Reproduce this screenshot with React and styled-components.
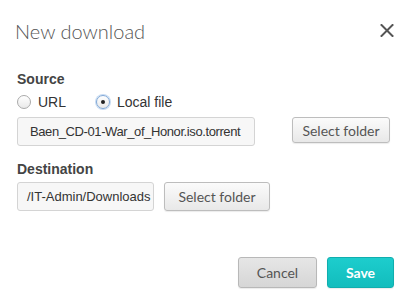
import React from "react";
import styled, { createGlobalStyle } from "styled-components";

const Global = createGlobalStyle`
  html, body { margin: 0; padding: 0; background: #fff; }
  * { box-sizing: border-box; }
`;

const Dialog = styled.div`
  width: 408px;
  height: 305px;
  background: #fff;
  display: flex;
  flex-direction: column;
`;

const Header = styled.div`
  display: flex;
  justify-content: space-between;
  align-items: center;
  padding: 17px 14px 0 15px;
  height: 44px;
`;

const Title = styled.h1`
  margin: 0;
  font-family: Lato, sans-serif;
  font-weight: 300;
  font-size: 20px;
  line-height: 24px;
  color: #555;
`;

const Close = styled.button`
  border: 0;
  background: none;
  padding: 0;
  width: 14px;
  height: 14px;
  display: flex;
  cursor: pointer;
`;

const Body = styled.div`
  padding: 27px 18px 0 17px;
  display: flex;
  flex-direction: column;
`;

const Label = styled.div`
  font-family: "Liberation Sans", Arial, sans-serif;
  font-weight: 700;
  font-size: 14px;
  line-height: 16px;
  color: #444;
  margin-top: ${(p) => p.$top || 0}px;
`;

const RadioRow = styled.div`
  display: flex;
  gap: 30px;
  height: 30px;
  align-items: center;
`;

const RadioLabel = styled.label`
  display: flex;
  align-items: center;
  gap: 7px;
  font-family: "Liberation Sans", Arial, sans-serif;
  font-size: 14px;
  color: #333;
`;

const Dot = styled.span`
  width: 14px;
  height: 14px;
  border-radius: 50%;
  border: 1px solid ${(p) => (p.$on ? "#7fa7d6" : "#aaa")};
  background: linear-gradient(#fff, #e9e9e9);
  box-shadow: ${(p) => (p.$on ? "0 0 0 1px #c7dbf2" : "none")};
  display: flex;
  align-items: center;
  justify-content: center;
  &::after {
    content: "";
    width: 4px;
    height: 4px;
    border-radius: 50%;
    background: ${(p) => (p.$on ? "#222" : "transparent")};
  }
`;

const FieldRow = styled.div`
  display: flex;
  align-items: flex-start;
  justify-content: ${(p) => (p.$spread ? "space-between" : "flex-start")};
  gap: 10px;
  margin-top: ${(p) => p.$top || 0}px;
`;

const Field = styled.div`
  width: ${(p) => p.$w}px;
  height: 29px;
  border: 1px solid #d4d4d4;
  border-radius: 3px;
  background: #f7f7f7;
  font-family: "Liberation Sans", Arial, sans-serif;
  font-size: 13px;
  letter-spacing: ${(p) => p.$track || 0}px;
  color: #333;
  display: flex;
  align-items: center;
  padding-left: ${(p) => p.$pad}px;
  white-space: nowrap;
  overflow: hidden;
`;

const Button = styled.button`
  width: ${(p) => p.$w}px;
  height: ${(p) => p.$h}px;
  border: 1px solid #bdbdbd;
  border-radius: 3px;
  background: linear-gradient(#fbfbfb, #e8e8e8);
  box-shadow: 0 1px 1px rgba(0, 0, 0, 0.08);
  font-family: Lato, sans-serif;
  font-size: 14px;
  color: #555;
  padding: 0;
  cursor: pointer;
`;

const Footer = styled.div`
  margin-top: auto;
  display: flex;
  justify-content: flex-end;
  gap: 10px;
  padding: 0 14px 17px 0;
`;

const Cancel = styled(Button)`
  background: linear-gradient(#e6e6e6, #d6d6d6);
  border-color: #b8b8b8;
`;

const Save = styled(Button)`
  background: linear-gradient(#1dcdcd, #12bdbd);
  border-color: #10aeae;
  color: #fff;
  font-weight: 700;
`;

export default function App() {
  return (
    <Dialog>
      <Global />
      <Header>
        <Title>New download</Title>
        <Close aria-label="Close">
          <svg width="14" height="13" viewBox="0 0 14 13">
            <path d="M1.5 1 L12.5 12 M12.5 1 L1.5 12" stroke="#555" strokeWidth="2" strokeLinecap="square" />
          </svg>
        </Close>
      </Header>
      <Body>
        <Label>Source</Label>
        <RadioRow>
          <RadioLabel><Dot />URL</RadioLabel>
          <RadioLabel><Dot $on />Local file</RadioLabel>
        </RadioRow>
        <FieldRow $spread>
          <Field $w={238} $pad={12} $track={-0.4}>Baen_CD-01-War_of_Honor.iso.torrent</Field>
          <Button $w={98} $h={26}>Select folder</Button>
        </FieldRow>
        <Label $top={15}>Destination</Label>
        <FieldRow $top={5}>
          <Field $w={137} $pad={9}>/IT-Admin/Downloads</Field>
          <Button $w={106} $h={29}>Select folder</Button>
        </FieldRow>
      </Body>
      <Footer>
        <Cancel $w={79} $h={31}>Cancel</Cancel>
        <Save $w={67} $h={31}>Save</Save>
      </Footer>
    </Dialog>
  );
}
